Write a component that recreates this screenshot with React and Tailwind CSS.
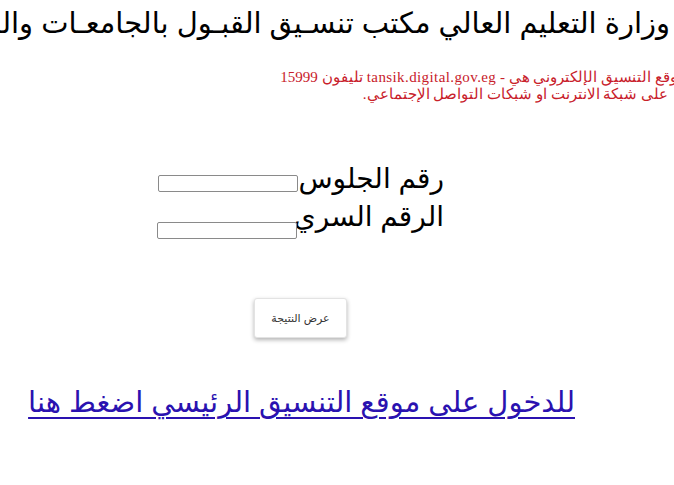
import React from 'react'

function App() {
  return (
    <div dir="rtl" className="w-[674px] h-[485px] overflow-hidden bg-white relative" style={{ fontFamily: '"Liberation Sans", "DejaVu Sans", Arial, sans-serif' }}>
      <div className="pr-[4px] pt-[3px]">
        <h1 className="whitespace-nowrap text-[29px] leading-[40px] text-black">
          وزارة التعليم العالي مكتب تنسـيق القبـول بالجامعـات والمعاهد
        </h1>
      </div>

      <div className="mt-[26px] text-[15px] leading-[17px] text-[#c8202a]" style={{ fontFamily: '"Liberation Serif", "DejaVu Serif", serif' }}>
        <div className="mr-[-12px] whitespace-nowrap tracking-[0.4px]">
          موقع التنسيق الإلكتروني هي - tansik.digital.gov.eg تليفون 15999
        </div>
        <div className="mr-[6px] whitespace-nowrap">على شبكة الانترنت او شبكات التواصل الإجتماعي.</div>
      </div>

      <div className="mt-[60px] mr-[230px] flex flex-col gap-[6px]">
        <div className="flex items-end">
          <span className="text-[28px] leading-[32px] text-black">رقم الجلوس</span>
          <input className="w-[140px] h-[17px] mb-[3px] border border-[#8a8a8a] rounded-[2px] bg-white" />
        </div>
        <div className="flex items-end">
          <span className="text-[28px] leading-[32px] text-black">الرقم السري</span>
          <input className="w-[140px] h-[17px] mb-[-6px] mr-[-3px] border border-[#8a8a8a] rounded-[2px] bg-white" />
        </div>
      </div>

      <div className="mt-[65px] mr-[327px] flex">
        <button className="w-[93px] h-[40px] bg-white border border-[#e3e3e3] rounded-[3px] shadow-[0_2px_4px_rgba(0,0,0,0.3)] text-[11px] text-[#333]">
          عرض النتيجة
        </button>
      </div>

      <div className="mt-[44px] mr-[99px] flex">
        <a href="#" className="text-[29px] leading-[40px] text-[#2a12b0] underline decoration-[2px] underline-offset-[5px] whitespace-nowrap">
          للدخول على موقع التنسيق الرئيسي اضغط هنا
        </a>
      </div>
    </div>
  )
}

export default App
